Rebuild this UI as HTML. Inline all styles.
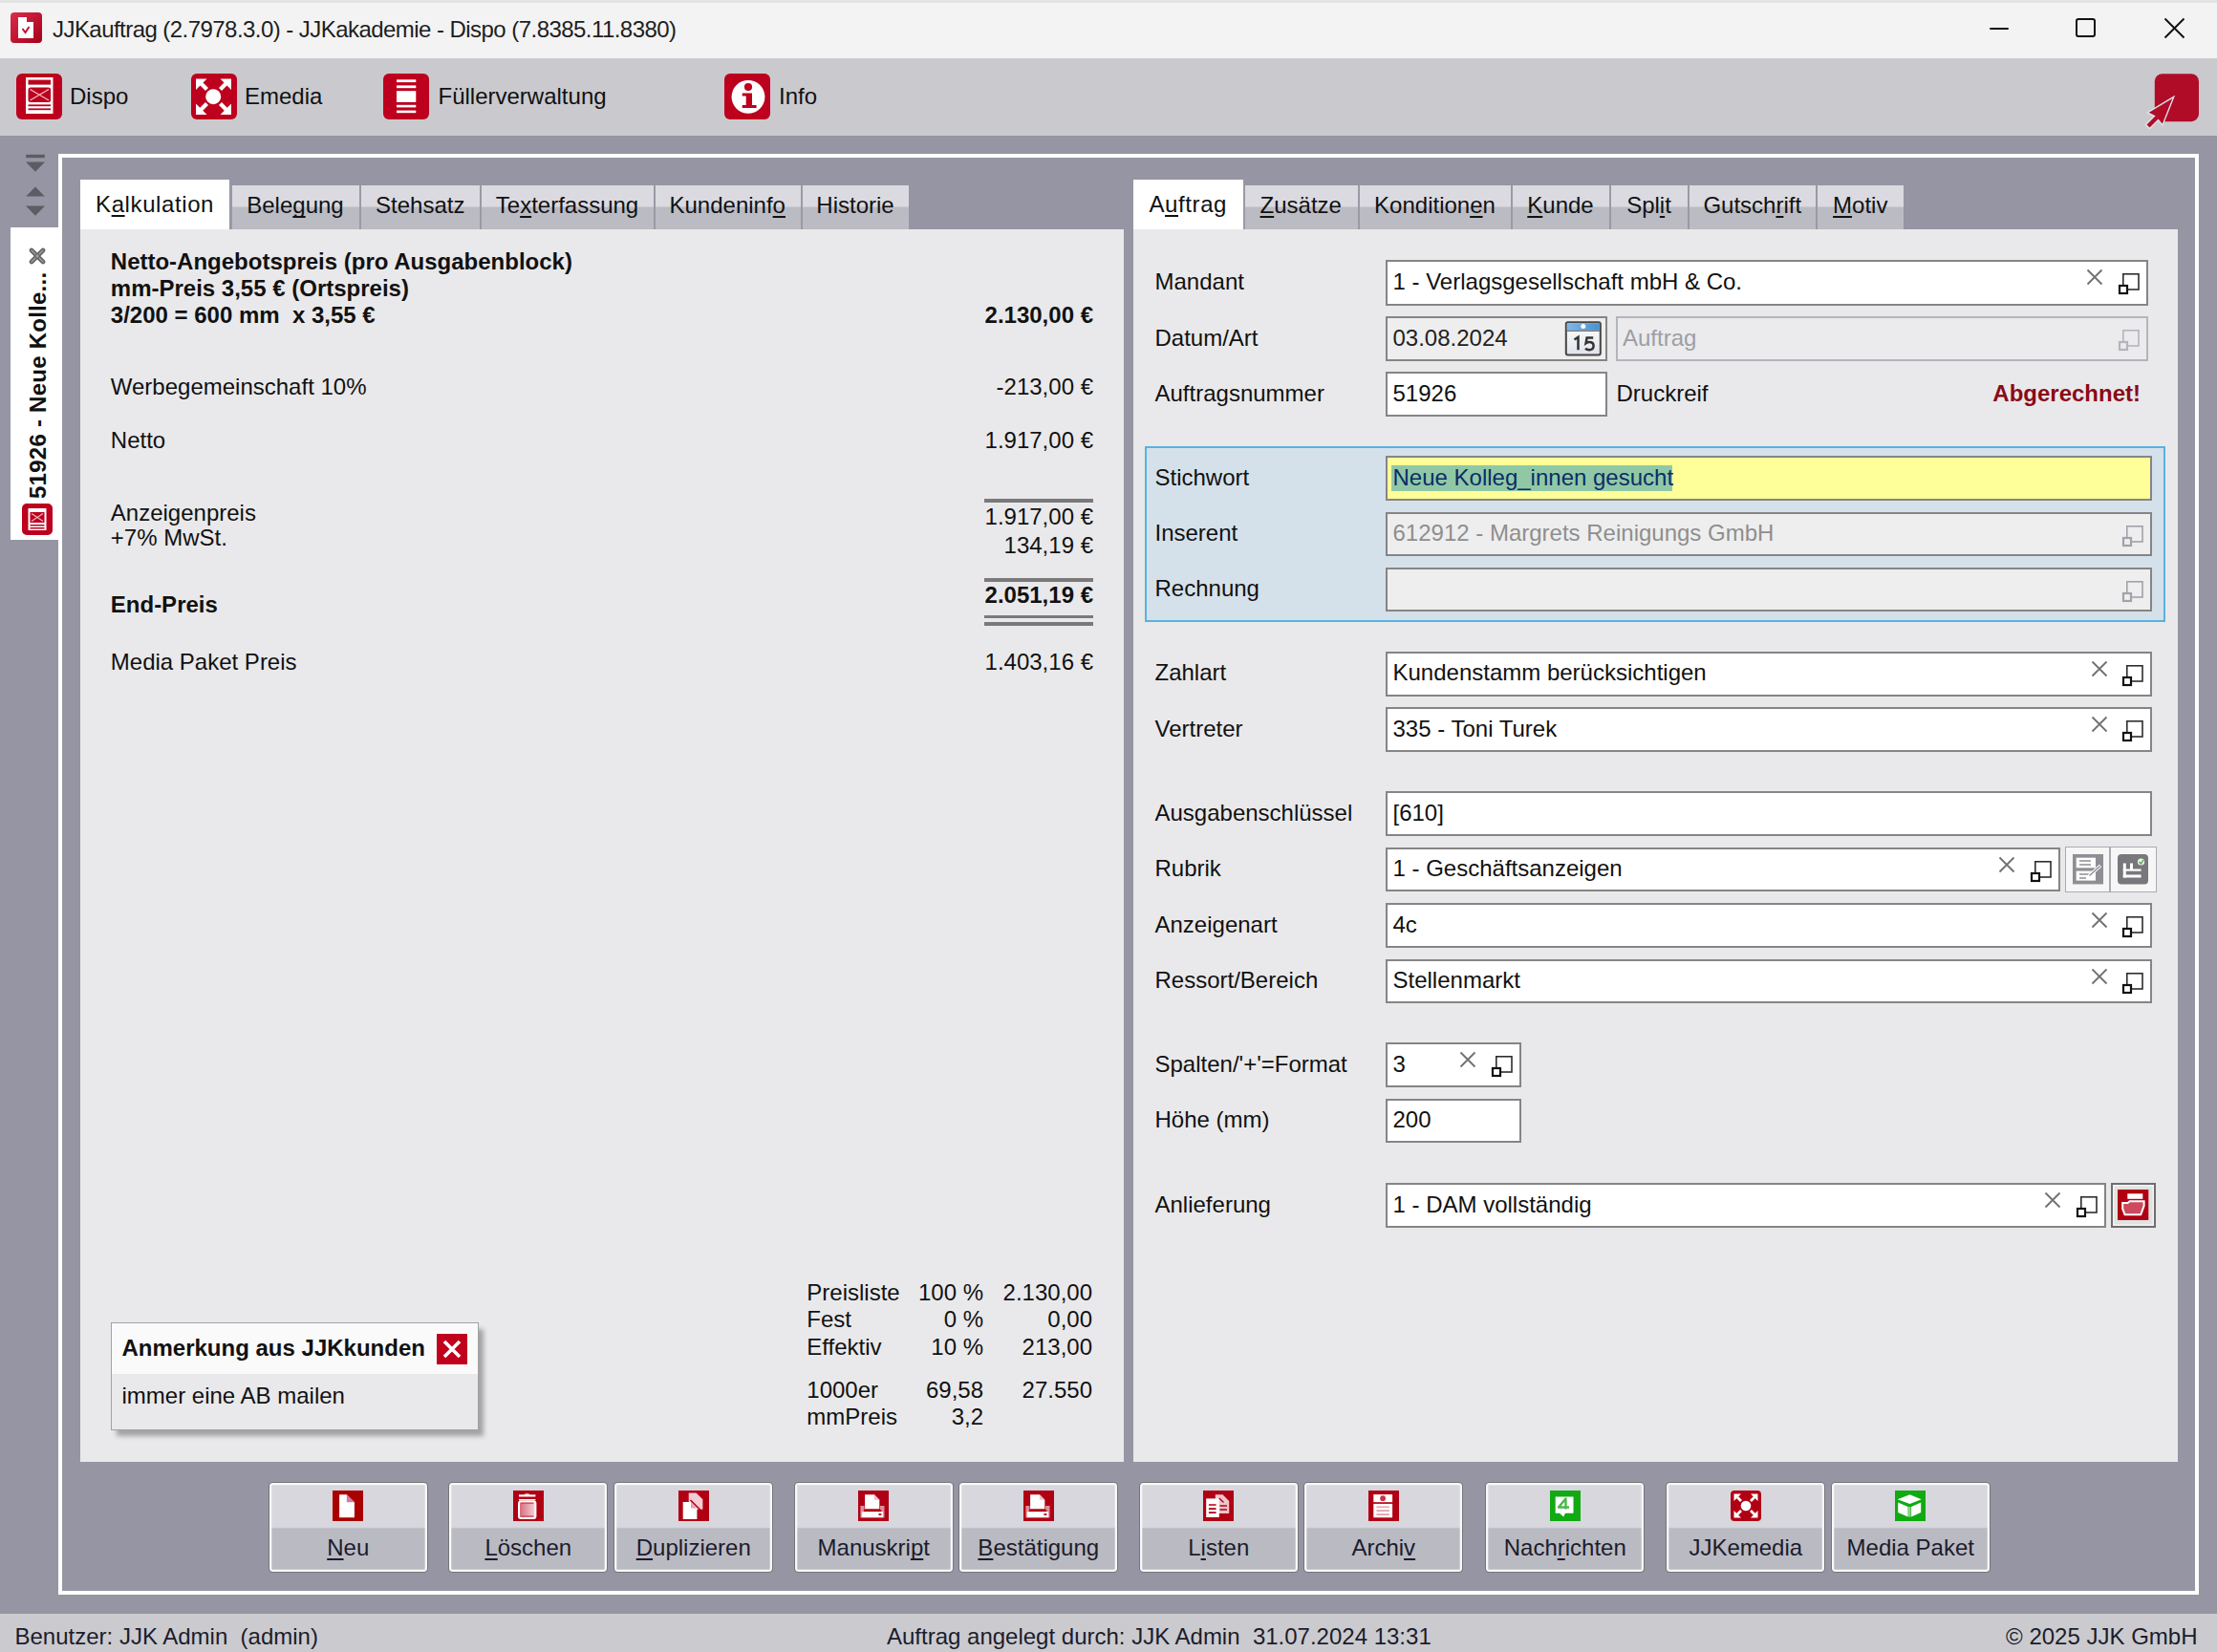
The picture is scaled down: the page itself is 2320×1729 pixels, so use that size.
<!DOCTYPE html>
<html><head><meta charset="utf-8"><title>JJKauftrag</title>
<style>
html,body{margin:0;padding:0;}
body{width:2320px;height:1729px;position:relative;overflow:hidden;background:#9695a3;font-family:"Liberation Sans",sans-serif;}
div,span,svg{position:absolute;box-sizing:border-box;}
.t{line-height:28px;white-space:pre;}
u{text-decoration:underline;text-decoration-thickness:2px;text-underline-offset:3px;text-decoration-skip-ink:none;}
</style></head><body>

<div style="left:0px;top:0px;width:2320.00px;height:61.00px;background:#f3f3f3;"></div>
<div style="left:0px;top:0px;width:2320.00px;height:3.00px;background:#e4e4e4;"></div>
<svg style="left:11px;top:13px" width="33" height="33" viewBox="0 0 33 33"><defs><linearGradient id="tg" x1="0" y1="0" x2="1" y2="1"><stop offset="0" stop-color="#dc2c4c"/><stop offset="1" stop-color="#a4001a"/></linearGradient></defs><rect x="0" y="0" width="33" height="32" rx="4" fill="url(#tg)"/><path d="M8 5 H17 V10 H24 V27 H8 Z" fill="#fff"/><path d="M12.5 17 L15.5 21 L19.5 15" stroke="#c8102e" stroke-width="2" fill="none"/></svg>
<span class="t" style="top:16.5px;font-size:24px;font-weight:normal;color:#1e1e1e;left:55px;letter-spacing:-0.55px;">JJKauftrag (2.7978.3.0) - JJKakademie - Dispo (7.8385.11.8380)</span>
<div style="left:2081.8px;top:28.9px;width:20.40px;height:2.00px;background:#111;border-radius:1px;"></div>
<div style="left:2172.4px;top:19.1px;width:20.20px;height:20.10px;border:2.1px solid #111;border-radius:3px;"></div>
<svg style="left:2264px;top:18px" width="23" height="23" viewBox="0 0 23 23"><path d="M1.5 1.5 L21.5 21.5 M21.5 1.5 L1.5 21.5" stroke="#111" stroke-width="1.9"/></svg>
<div style="left:0px;top:61px;width:2320.00px;height:80.50px;background:#cacace;"></div>
<svg style="left:17px;top:77px" width="48" height="48" viewBox="0 0 48 48"><rect x="0" y="0" width="48" height="48" rx="6" fill="#bc001e"/><rect x="10" y="4" width="28.5" height="38" fill="#fff"/><rect x="12.5" y="6.6" width="23.6" height="5" fill="#bc001e"/><rect x="12.5" y="14.6" width="23.6" height="15.3" rx="2.5" fill="#bc001e"/><path d="M14.5 16.5 L34 28 M34 16.5 L14.5 28" stroke="#f4b8c0" stroke-width="1.4"/><rect x="12.5" y="32.4" width="23.6" height="1.8" fill="#bc001e"/><rect x="12.5" y="36.4" width="23.6" height="1.8" fill="#bc001e"/></svg>
<span class="t" style="top:87.0px;font-size:24px;font-weight:normal;color:#111;left:73px;">Dispo</span>
<svg style="left:200px;top:77px" width="48" height="48" viewBox="0 0 48 48"><rect x="0" y="0" width="48" height="48" rx="6" fill="#bc001e"/><circle cx="23.2" cy="24.2" r="8" fill="#fff"/><g stroke="#fff" stroke-width="4.2"><path d="M9 9 L16.5 16.5"/><path d="M38 9 L30.5 16.5"/><path d="M9 39 L16.5 31.5"/><path d="M38 39 L30.5 31.5"/></g><g fill="#fff"><path d="M5 5.5 H16.5 L5 17 Z"/><path d="M42 5.5 H30.5 L42 17 Z"/><path d="M5 43 H16.5 L5 31.5 Z"/><path d="M42 43 H30.5 L42 31.5 Z"/></g></svg>
<span class="t" style="top:87.0px;font-size:24px;font-weight:normal;color:#111;left:256px;">Emedia</span>
<svg style="left:401px;top:77px" width="48" height="48" viewBox="0 0 48 48"><rect x="0" y="0" width="48" height="48" rx="6" fill="#bc001e"/><rect x="14" y="6.3" width="20.3" height="2.8" fill="#fff"/><rect x="14" y="12.4" width="20.3" height="2.8" fill="#fff"/><rect x="14" y="18.2" width="20.3" height="11.7" fill="#fff"/><rect x="14" y="32.8" width="20.3" height="2.6" fill="#fff"/><rect x="14" y="38.6" width="20.3" height="2.6" fill="#fff"/></svg>
<span class="t" style="top:87.0px;font-size:24px;font-weight:normal;color:#111;left:458.5px;">Füllerverwaltung</span>
<svg style="left:758px;top:77px" width="48" height="48" viewBox="0 0 48 48"><rect x="0" y="0" width="48" height="48" rx="6" fill="#bc001e"/><circle cx="25" cy="24.4" r="17.4" fill="#fff"/><circle cx="25" cy="14" r="4.1" fill="#bc001e"/><path d="M18.7 20.4 H29 V33 H33.6 V36 H18.7 V33 H22.7 V23.4 H18.7 Z" fill="#bc001e"/></svg>
<span class="t" style="top:87.0px;font-size:24px;font-weight:normal;color:#111;left:815px;">Info</span>
<svg style="left:2240px;top:70px" width="70" height="70" viewBox="0 0 70 70"><rect x="14.8" y="7.2" width="46.2" height="50" rx="8" fill="#b00c28"/><path d="M34.7 31.4 L7.2 47.9 L14.5 51.5 L5.5 60.5 L9.5 64.5 L18.5 55.5 L23 61 Z" fill="#b00c28" stroke="#dfe4ea" stroke-width="1.4" stroke-linejoin="miter"/></svg>
<svg style="left:26px;top:160px" width="22" height="70" viewBox="0 0 22 70"><rect x="1.2" y="1.8" width="19.6" height="3.4" fill="#5c5c64"/><path d="M1 9.6 H21 L11 19.8 Z" fill="#5c5c64"/><path d="M1.2 45.6 H20.8 L11 35.6 Z" fill="#5c5c64"/><path d="M1 55.6 H21 L11 65.8 Z" fill="#5c5c64"/></svg>
<div style="left:10.7px;top:238px;width:51.30px;height:327.00px;background:#fff;"></div>
<svg style="left:30px;top:259px" width="18" height="18" viewBox="0 0 18 18"><path d="M3 3 L15 15 M15 3 L3 15" stroke="#606060" stroke-width="4.6" stroke-linecap="round"/><path d="M3 3 L15 15 M15 3 L3 15" stroke="#a0a0a0" stroke-width="1.6" stroke-linecap="round"/><circle cx="9" cy="9" r="2.2" fill="#a0a0a0" stroke="#606060" stroke-width="1"/></svg>
<span class="t" style="left:-85px;top:383px;width:250px;font-size:24px;font-weight:bold;color:#111;transform:rotate(-90deg);text-align:left;letter-spacing:0.25px;">51926 - Neue Kolle...</span>
<svg style="left:23px;top:527px" width="32" height="33" viewBox="0 0 32 33"><rect width="32" height="33" rx="5" fill="#bc001e"/><rect x="6.5" y="5" width="19" height="23" fill="#fff"/><rect x="8.5" y="9" width="15" height="11" fill="#bc001e"/><path d="M10 10.5 L22 18.5 M22 10.5 L10 18.5" stroke="#f4b8c0" stroke-width="1.2"/><rect x="8.5" y="22" width="15" height="1.5" fill="#bc001e"/><rect x="8.5" y="25" width="15" height="1.5" fill="#bc001e"/></svg>
<div style="left:61px;top:161px;width:2240.00px;height:1508.00px;border:4.8px solid #fff;"></div>
<div style="left:83.6px;top:239.5px;width:1092.40px;height:1290.50px;background:#e9e9eb;"></div>
<div style="left:1186px;top:239.5px;width:1093.00px;height:1290.50px;background:#e9e9eb;"></div>
<div style="left:83.6px;top:187.5px;width:156.90px;height:52.00px;background:#fff;"></div>
<span class="t" style="top:199.5px;font-size:24px;font-weight:normal;color:#111;left:-237.95px;width:800px;text-align:center;letter-spacing:0.6px;">K<u>a</u>lkulation</span>
<div style="left:240.5px;top:193.5px;width:135.50px;height:46.00px;background:linear-gradient(#dadae0 0,#dadae0 21.5px,#bbbbc4 23.5px,#bbbbc4 100%);border-left:2.5px solid #9a9aa6;"></div>
<span class="t" style="top:201.3px;font-size:24px;font-weight:normal;color:#111;left:-91.0px;width:800px;text-align:center;">Bele<u>g</u>ung</span>
<div style="left:376px;top:193.5px;width:126.00px;height:46.00px;background:linear-gradient(#dadae0 0,#dadae0 21.5px,#bbbbc4 23.5px,#bbbbc4 100%);border-left:2.5px solid #9a9aa6;"></div>
<span class="t" style="top:201.3px;font-size:24px;font-weight:normal;color:#111;left:39.75px;width:800px;text-align:center;">Stehsatz</span>
<div style="left:502px;top:193.5px;width:181.50px;height:46.00px;background:linear-gradient(#dadae0 0,#dadae0 21.5px,#bbbbc4 23.5px,#bbbbc4 100%);border-left:2.5px solid #9a9aa6;"></div>
<span class="t" style="top:201.3px;font-size:24px;font-weight:normal;color:#111;left:193.5px;width:800px;text-align:center;">Te<u>x</u>terfassung</span>
<div style="left:683.5px;top:193.5px;width:154.00px;height:46.00px;background:linear-gradient(#dadae0 0,#dadae0 21.5px,#bbbbc4 23.5px,#bbbbc4 100%);border-left:2.5px solid #9a9aa6;"></div>
<span class="t" style="top:201.3px;font-size:24px;font-weight:normal;color:#111;left:361.25px;width:800px;text-align:center;">Kundeninf<u>o</u></span>
<div style="left:837.5px;top:193.5px;width:113.50px;height:46.00px;background:linear-gradient(#dadae0 0,#dadae0 21.5px,#bbbbc4 23.5px,#bbbbc4 100%);border-left:2.5px solid #9a9aa6;"></div>
<span class="t" style="top:201.3px;font-size:24px;font-weight:normal;color:#111;left:495.0px;width:800px;text-align:center;">Historie</span>
<div style="left:1186px;top:187.5px;width:114.50px;height:52.00px;background:#fff;"></div>
<span class="t" style="top:199.5px;font-size:24px;font-weight:normal;color:#111;left:843.25px;width:800px;text-align:center;letter-spacing:0.6px;">A<u>u</u>ftrag</span>
<div style="left:1300.5px;top:193.5px;width:120.00px;height:46.00px;background:linear-gradient(#dadae0 0,#dadae0 21.5px,#bbbbc4 23.5px,#bbbbc4 100%);border-left:2.5px solid #9a9aa6;"></div>
<span class="t" style="top:201.3px;font-size:24px;font-weight:normal;color:#111;left:961.25px;width:800px;text-align:center;"><u>Z</u>usätze</span>
<div style="left:1420.5px;top:193.5px;width:160.50px;height:46.00px;background:linear-gradient(#dadae0 0,#dadae0 21.5px,#bbbbc4 23.5px,#bbbbc4 100%);border-left:2.5px solid #9a9aa6;"></div>
<span class="t" style="top:201.3px;font-size:24px;font-weight:normal;color:#111;left:1101.5px;width:800px;text-align:center;">Kondition<u>e</u>n</span>
<div style="left:1581px;top:193.5px;width:102.50px;height:46.00px;background:linear-gradient(#dadae0 0,#dadae0 21.5px,#bbbbc4 23.5px,#bbbbc4 100%);border-left:2.5px solid #9a9aa6;"></div>
<span class="t" style="top:201.3px;font-size:24px;font-weight:normal;color:#111;left:1233.0px;width:800px;text-align:center;"><u>K</u>unde</span>
<div style="left:1683.5px;top:193.5px;width:82.50px;height:46.00px;background:linear-gradient(#dadae0 0,#dadae0 21.5px,#bbbbc4 23.5px,#bbbbc4 100%);border-left:2.5px solid #9a9aa6;"></div>
<span class="t" style="top:201.3px;font-size:24px;font-weight:normal;color:#111;left:1325.5px;width:800px;text-align:center;">Spl<u>i</u>t</span>
<div style="left:1766px;top:193.5px;width:134.00px;height:46.00px;background:linear-gradient(#dadae0 0,#dadae0 21.5px,#bbbbc4 23.5px,#bbbbc4 100%);border-left:2.5px solid #9a9aa6;"></div>
<span class="t" style="top:201.3px;font-size:24px;font-weight:normal;color:#111;left:1433.75px;width:800px;text-align:center;">Gutsch<u>r</u>ift</span>
<div style="left:1900px;top:193.5px;width:92.00px;height:46.00px;background:linear-gradient(#dadae0 0,#dadae0 21.5px,#bbbbc4 23.5px,#bbbbc4 100%);border-left:2.5px solid #9a9aa6;"></div>
<span class="t" style="top:201.3px;font-size:24px;font-weight:normal;color:#111;left:1546.75px;width:800px;text-align:center;"><u>M</u>otiv</span>
<span class="t" style="top:260.0px;font-size:24px;font-weight:bold;color:#111;left:115.8px;">Netto-Angebotspreis (pro Ausgabenblock)</span>
<span class="t" style="top:287.5px;font-size:24px;font-weight:bold;color:#111;left:115.8px;">mm-Preis 3,55 € (Ortspreis)</span>
<span class="t" style="top:315.5px;font-size:24px;font-weight:bold;color:#111;left:115.8px;">3/200 = 600 mm  x 3,55 €</span>
<span class="t" style="top:316.0px;font-size:24px;font-weight:bold;color:#111;right:1176px;">2.130,00 €</span>
<span class="t" style="top:390.5px;font-size:24px;font-weight:normal;color:#111;left:115.8px;">Werbegemeinschaft 10%</span>
<span class="t" style="top:390.5px;font-size:24px;font-weight:normal;color:#111;right:1176px;">-213,00 €</span>
<span class="t" style="top:446.5px;font-size:24px;font-weight:normal;color:#111;left:115.8px;">Netto</span>
<span class="t" style="top:446.5px;font-size:24px;font-weight:normal;color:#111;right:1176px;">1.917,00 €</span>
<div style="left:1030px;top:522px;width:114.00px;height:3.50px;background:#7a7a7a;"></div>
<span class="t" style="top:522.5px;font-size:24px;font-weight:normal;color:#111;left:115.8px;">Anzeigenpreis</span>
<span class="t" style="top:526.5px;font-size:24px;font-weight:normal;color:#111;right:1176px;">1.917,00 €</span>
<span class="t" style="top:549.0px;font-size:24px;font-weight:normal;color:#111;left:115.8px;">+7% MwSt.</span>
<span class="t" style="top:556.5px;font-size:24px;font-weight:normal;color:#111;right:1176px;">134,19 €</span>
<div style="left:1030px;top:605px;width:114.00px;height:3.50px;background:#7a7a7a;"></div>
<span class="t" style="top:619.0px;font-size:24px;font-weight:bold;color:#111;left:115.8px;">End-Preis</span>
<span class="t" style="top:608.5px;font-size:24px;font-weight:bold;color:#111;right:1176px;">2.051,19 €</span>
<div style="left:1030px;top:643.5px;width:114.00px;height:3.50px;background:#7a7a7a;"></div>
<div style="left:1030px;top:651px;width:114.00px;height:3.50px;background:#7a7a7a;"></div>
<span class="t" style="top:679.0px;font-size:24px;font-weight:normal;color:#111;left:115.8px;">Media Paket Preis</span>
<span class="t" style="top:679.0px;font-size:24px;font-weight:normal;color:#111;right:1176px;">1.403,16 €</span>
<span class="t" style="top:1339.0px;font-size:24px;font-weight:normal;color:#111;left:844.3px;">Preisliste</span>
<span class="t" style="top:1339.0px;font-size:24px;font-weight:normal;color:#111;right:1291px;">100 %</span>
<span class="t" style="top:1339.0px;font-size:24px;font-weight:normal;color:#111;right:1177px;">2.130,00</span>
<span class="t" style="top:1367.3px;font-size:24px;font-weight:normal;color:#111;left:844.3px;">Fest</span>
<span class="t" style="top:1367.3px;font-size:24px;font-weight:normal;color:#111;right:1291px;">0 %</span>
<span class="t" style="top:1367.3px;font-size:24px;font-weight:normal;color:#111;right:1177px;">0,00</span>
<span class="t" style="top:1395.6px;font-size:24px;font-weight:normal;color:#111;left:844.3px;">Effektiv</span>
<span class="t" style="top:1395.6px;font-size:24px;font-weight:normal;color:#111;right:1291px;">10 %</span>
<span class="t" style="top:1395.6px;font-size:24px;font-weight:normal;color:#111;right:1177px;">213,00</span>
<span class="t" style="top:1441.4px;font-size:24px;font-weight:normal;color:#111;left:844.3px;">1000er</span>
<span class="t" style="top:1441.4px;font-size:24px;font-weight:normal;color:#111;right:1291px;">69,58</span>
<span class="t" style="top:1441.4px;font-size:24px;font-weight:normal;color:#111;right:1177px;">27.550</span>
<span class="t" style="top:1469.0px;font-size:24px;font-weight:normal;color:#111;left:844.3px;">mmPreis</span>
<span class="t" style="top:1469.0px;font-size:24px;font-weight:normal;color:#111;right:1291px;">3,2</span>
<div style="left:122px;top:1391px;width:384.00px;height:112.00px;background:rgba(0,0,0,0.30);filter:blur(2.5px);"></div>
<div style="left:115.5px;top:1384px;width:385.00px;height:113.00px;background:#e9e9eb;border:1px solid #a2a2a2;"></div>
<div style="left:116.5px;top:1385px;width:383.00px;height:53.00px;background:#fafafa;"></div>
<span class="t" style="top:1397.0px;font-size:24px;font-weight:bold;color:#111;left:127.5px;">Anmerkung aus JJKkunden</span>
<svg style="left:457px;top:1396px" width="32" height="32" viewBox="0 0 32 32"><rect width="32" height="32" fill="#c0001c"/><path d="M8 8 L24 24 M24 8 L8 24" stroke="#fff" stroke-width="3.6"/></svg>
<span class="t" style="top:1447.0px;font-size:24px;font-weight:normal;color:#111;left:127.5px;">immer eine AB mailen</span>
<span class="t" style="top:280.7px;font-size:24px;font-weight:normal;color:#111;left:1208.5px;">Mandant</span>
<div style="left:1449.5px;top:272.2px;width:798.30px;height:47.50px;background:#fff;border:2px solid #858585;"></div>
<span class="t" style="top:280.7px;font-size:24px;font-weight:normal;color:#111;left:1457.5px;">1 - Verlagsgesellschaft mbH &amp; Co.</span>
<svg style="left:2183.3px;top:281.2px" width="18" height="18" viewBox="0 0 18 18"><path d="M1.5 1.5 L16.5 16.5 M16.5 1.5 L1.5 16.5" stroke="#727272" stroke-width="1.9"/></svg>
<svg style="left:2214.8px;top:284.2px" width="26" height="26" viewBox="0 0 26 26"><rect x="6.8" y="2.8" width="16.2" height="16.2" fill="none" stroke="#2e2e2e" stroke-width="1.6"/><rect x="3" y="15" width="8" height="8" fill="#fff" stroke="#111" stroke-width="2.2"/></svg>
<span class="t" style="top:339.5px;font-size:24px;font-weight:normal;color:#111;left:1208.5px;">Datum/Art</span>
<div style="left:1449.5px;top:330.6px;width:232.50px;height:47.20px;background:#eeeeee;border:2px solid #858585;"></div>
<span class="t" style="top:339.5px;font-size:24px;font-weight:normal;color:#222;left:1457.5px;">03.08.2024</span>
<svg style="left:1637px;top:336px" width="40" height="37" viewBox="0 0 40 37"><defs><linearGradient id="cg" x1="0" y1="0" x2="0" y2="1"><stop offset="0" stop-color="#ffffff"/><stop offset="1" stop-color="#dfe3ea"/></linearGradient><linearGradient id="cb" x1="0" y1="0" x2="1" y2="0"><stop offset="0" stop-color="#7cb8ea"/><stop offset="1" stop-color="#4a90cc"/></linearGradient></defs><rect x="1.8" y="1.2" width="36" height="34.4" rx="2" fill="url(#cg)" stroke="#454545" stroke-width="2"/><rect x="2.8" y="2.2" width="34" height="7.4" fill="url(#cb)"/><rect x="2.8" y="9.6" width="34" height="1.2" fill="#55606c"/><circle cx="19.8" cy="5.6" r="2.5" fill="#fff"/><path d="M10.5 19.5 L14.5 16.8 V30.2" fill="none" stroke="#333" stroke-width="2.5"/><path d="M30.2 17.6 H23.6 L22.6 23.2 Q24.2 22 26.2 22 Q30.6 22 30.6 26 Q30.6 30.2 26 30.2 Q23.6 30.2 22 28.8" fill="none" stroke="#333" stroke-width="2.5"/></svg>
<div style="left:1690.8px;top:330.6px;width:557.00px;height:47.20px;background:#ebebee;border:2px solid #b4b4bc;"></div>
<span class="t" style="top:339.5px;font-size:24px;font-weight:normal;color:#9e9ea2;left:1698px;">Auftrag</span>
<svg style="left:2214.8px;top:342.6px" width="26" height="26" viewBox="0 0 26 26"><rect x="6.8" y="2.8" width="16.2" height="16.2" fill="none" stroke="#b4b4bc" stroke-width="1.6"/><rect x="3" y="15" width="8" height="8" fill="#ebebee" stroke="#b4b4bc" stroke-width="2.2"/></svg>
<span class="t" style="top:398.0px;font-size:24px;font-weight:normal;color:#111;left:1208.5px;">Auftragsnummer</span>
<div style="left:1449.5px;top:388.6px;width:232.50px;height:47.20px;background:#fff;border:2px solid #858585;"></div>
<span class="t" style="top:398.0px;font-size:24px;font-weight:normal;color:#111;left:1457.5px;">51926</span>
<span class="t" style="top:398.0px;font-size:24px;font-weight:normal;color:#111;left:1691.5px;">Druckreif</span>
<span class="t" style="top:398.0px;font-size:24px;font-weight:bold;color:#8c0a16;right:80px;">Abgerechnet!</span>
<div style="left:1198.3px;top:467px;width:1067.70px;height:184.00px;background:#d5e1ea;border:2px solid #58b2e0;"></div>
<span class="t" style="top:486.0px;font-size:24px;font-weight:normal;color:#111;left:1208.5px;">Stichwort</span>
<div style="left:1449.5px;top:477.4px;width:802.80px;height:46.40px;background:#ffff99;border:2px solid #858585;"></div>
<div style="left:1456px;top:487.4px;width:294.40px;height:26.60px;background:#90c8a6;"></div>
<span class="t" style="top:486.0px;font-size:24px;font-weight:normal;color:#0b2d66;left:1457.5px;">Neue Kolleg_innen gesucht</span>
<span class="t" style="top:544.0px;font-size:24px;font-weight:normal;color:#111;left:1208.5px;">Inserent</span>
<div style="left:1449.5px;top:535.5px;width:802.80px;height:46.80px;background:#eeeeee;border:2px solid #858585;"></div>
<span class="t" style="top:544.0px;font-size:24px;font-weight:normal;color:#8e8e8e;left:1457.5px;">612912 - Margrets Reinigungs GmbH</span>
<svg style="left:2219.3px;top:547.5px" width="26" height="26" viewBox="0 0 26 26"><rect x="6.8" y="2.8" width="16.2" height="16.2" fill="none" stroke="#a2a2aa" stroke-width="1.6"/><rect x="3" y="15" width="8" height="8" fill="#eeeeee" stroke="#a2a2aa" stroke-width="2.2"/></svg>
<span class="t" style="top:602.1px;font-size:24px;font-weight:normal;color:#111;left:1208.5px;">Rechnung</span>
<div style="left:1449.5px;top:593.6px;width:802.80px;height:46.80px;background:#eeeeee;border:2px solid #858585;"></div>
<svg style="left:2219.3px;top:605.6px" width="26" height="26" viewBox="0 0 26 26"><rect x="6.8" y="2.8" width="16.2" height="16.2" fill="none" stroke="#a2a2aa" stroke-width="1.6"/><rect x="3" y="15" width="8" height="8" fill="#eeeeee" stroke="#a2a2aa" stroke-width="2.2"/></svg>
<span class="t" style="top:690.3px;font-size:24px;font-weight:normal;color:#111;left:1208.5px;">Zahlart</span>
<div style="left:1449.5px;top:681.8px;width:802.80px;height:46.80px;background:#fff;border:2px solid #858585;"></div>
<span class="t" style="top:690.3px;font-size:24px;font-weight:normal;color:#111;left:1457.5px;">Kundenstamm berücksichtigen</span>
<svg style="left:2187.8px;top:690.8px" width="18" height="18" viewBox="0 0 18 18"><path d="M1.5 1.5 L16.5 16.5 M16.5 1.5 L1.5 16.5" stroke="#727272" stroke-width="1.9"/></svg>
<svg style="left:2219.3px;top:693.8px" width="26" height="26" viewBox="0 0 26 26"><rect x="6.8" y="2.8" width="16.2" height="16.2" fill="none" stroke="#2e2e2e" stroke-width="1.6"/><rect x="3" y="15" width="8" height="8" fill="#fff" stroke="#111" stroke-width="2.2"/></svg>
<span class="t" style="top:748.9px;font-size:24px;font-weight:normal;color:#111;left:1208.5px;">Vertreter</span>
<div style="left:1449.5px;top:740.4px;width:802.80px;height:46.80px;background:#fff;border:2px solid #858585;"></div>
<span class="t" style="top:748.9px;font-size:24px;font-weight:normal;color:#111;left:1457.5px;">335 - Toni Turek</span>
<svg style="left:2187.8px;top:749.4px" width="18" height="18" viewBox="0 0 18 18"><path d="M1.5 1.5 L16.5 16.5 M16.5 1.5 L1.5 16.5" stroke="#727272" stroke-width="1.9"/></svg>
<svg style="left:2219.3px;top:752.4px" width="26" height="26" viewBox="0 0 26 26"><rect x="6.8" y="2.8" width="16.2" height="16.2" fill="none" stroke="#2e2e2e" stroke-width="1.6"/><rect x="3" y="15" width="8" height="8" fill="#fff" stroke="#111" stroke-width="2.2"/></svg>
<span class="t" style="top:836.8px;font-size:24px;font-weight:normal;color:#111;left:1208.5px;">Ausgabenschlüssel</span>
<div style="left:1449.5px;top:828.3px;width:802.80px;height:46.80px;background:#fff;border:2px solid #858585;"></div>
<span class="t" style="top:836.8px;font-size:24px;font-weight:normal;color:#111;left:1457.5px;">[610]</span>
<span class="t" style="top:895.1px;font-size:24px;font-weight:normal;color:#111;left:1208.5px;">Rubrik</span>
<div style="left:1449.5px;top:886.6px;width:706.00px;height:46.80px;background:#fff;border:2px solid #858585;"></div>
<span class="t" style="top:895.1px;font-size:24px;font-weight:normal;color:#111;left:1457.5px;">1 - Geschäftsanzeigen</span>
<svg style="left:2091.0px;top:895.6px" width="18" height="18" viewBox="0 0 18 18"><path d="M1.5 1.5 L16.5 16.5 M16.5 1.5 L1.5 16.5" stroke="#727272" stroke-width="1.9"/></svg>
<svg style="left:2122.5px;top:898.6px" width="26" height="26" viewBox="0 0 26 26"><rect x="6.8" y="2.8" width="16.2" height="16.2" fill="none" stroke="#2e2e2e" stroke-width="1.6"/><rect x="3" y="15" width="8" height="8" fill="#fff" stroke="#111" stroke-width="2.2"/></svg>
<div style="left:2160.5px;top:886px;width:96.00px;height:47.80px;background:#f6f6f6;border:1.6px solid #a8acb0;"></div>
<div style="left:2206.8px;top:886.5px;width:2.60px;height:46.80px;background:#a8acb0;"></div>
<svg style="left:2168.5px;top:894.3px" width="32" height="32" viewBox="0 0 32 32"><rect width="32" height="31.4" fill="#8e8e94"/><rect x="3.7" y="3.7" width="20.3" height="10.6" fill="#fff"/><rect x="3.7" y="17.6" width="20.3" height="10" fill="#fff"/><path d="M7 7 H19 M7 11 H19 M7 21 H17 M7 25 H14" stroke="#8e8e94" stroke-width="1.6"/><path d="M17 23 L29 12" stroke="#fff" stroke-width="3.5"/><path d="M17.5 22.5 L28.5 12.5" stroke="#8e8e94" stroke-width="1.4"/></svg>
<svg style="left:2216.4px;top:894.3px" width="32" height="32" viewBox="0 0 32 32"><rect width="32" height="31.4" rx="4" fill="#78787c"/><path d="M6 10 V24 H24.5 V18.5 H6" fill="none" stroke="#fff" stroke-width="0"/><rect x="5.8" y="9.5" width="3" height="15" fill="#fff"/><rect x="5.8" y="21.5" width="18.8" height="3" fill="#fff"/><rect x="5.8" y="15.5" width="18.8" height="2.2" fill="#fff"/><rect x="13" y="9.5" width="3" height="7" fill="#fff"/><circle cx="24.5" cy="8" r="3.6" fill="#e8f4e0"/><path d="M22.5 8 L24.5 10 L27 6" stroke="#4aa040" stroke-width="1.2" fill="none"/></svg>
<span class="t" style="top:953.8px;font-size:24px;font-weight:normal;color:#111;left:1208.5px;">Anzeigenart</span>
<div style="left:1449.5px;top:945.3px;width:802.80px;height:46.80px;background:#fff;border:2px solid #858585;"></div>
<span class="t" style="top:953.8px;font-size:24px;font-weight:normal;color:#111;left:1457.5px;">4c</span>
<svg style="left:2187.8px;top:954.3px" width="18" height="18" viewBox="0 0 18 18"><path d="M1.5 1.5 L16.5 16.5 M16.5 1.5 L1.5 16.5" stroke="#727272" stroke-width="1.9"/></svg>
<svg style="left:2219.3px;top:957.3px" width="26" height="26" viewBox="0 0 26 26"><rect x="6.8" y="2.8" width="16.2" height="16.2" fill="none" stroke="#2e2e2e" stroke-width="1.6"/><rect x="3" y="15" width="8" height="8" fill="#fff" stroke="#111" stroke-width="2.2"/></svg>
<span class="t" style="top:1012.1px;font-size:24px;font-weight:normal;color:#111;left:1208.5px;">Ressort/Bereich</span>
<div style="left:1449.5px;top:1003.6px;width:802.80px;height:46.80px;background:#fff;border:2px solid #858585;"></div>
<span class="t" style="top:1012.1px;font-size:24px;font-weight:normal;color:#111;left:1457.5px;">Stellenmarkt</span>
<svg style="left:2187.8px;top:1012.6px" width="18" height="18" viewBox="0 0 18 18"><path d="M1.5 1.5 L16.5 16.5 M16.5 1.5 L1.5 16.5" stroke="#727272" stroke-width="1.9"/></svg>
<svg style="left:2219.3px;top:1015.6px" width="26" height="26" viewBox="0 0 26 26"><rect x="6.8" y="2.8" width="16.2" height="16.2" fill="none" stroke="#2e2e2e" stroke-width="1.6"/><rect x="3" y="15" width="8" height="8" fill="#fff" stroke="#111" stroke-width="2.2"/></svg>
<span class="t" style="top:1099.5px;font-size:24px;font-weight:normal;color:#111;left:1208.5px;">Spalten/'+'=Format</span>
<div style="left:1449.5px;top:1091px;width:142.30px;height:46.80px;background:#fff;border:2px solid #858585;"></div>
<span class="t" style="top:1099.5px;font-size:24px;font-weight:normal;color:#111;left:1457.5px;">3</span>
<svg style="left:1527.3px;top:1100px" width="18" height="18" viewBox="0 0 18 18"><path d="M1.5 1.5 L16.5 16.5 M16.5 1.5 L1.5 16.5" stroke="#727272" stroke-width="1.9"/></svg>
<svg style="left:1558.8px;top:1103px" width="26" height="26" viewBox="0 0 26 26"><rect x="6.8" y="2.8" width="16.2" height="16.2" fill="none" stroke="#2e2e2e" stroke-width="1.6"/><rect x="3" y="15" width="8" height="8" fill="#fff" stroke="#111" stroke-width="2.2"/></svg>
<span class="t" style="top:1158.2px;font-size:24px;font-weight:normal;color:#111;left:1208.5px;">Höhe (mm)</span>
<div style="left:1449.5px;top:1149.7px;width:142.30px;height:46.80px;background:#fff;border:2px solid #858585;"></div>
<span class="t" style="top:1158.2px;font-size:24px;font-weight:normal;color:#111;left:1457.5px;">200</span>
<span class="t" style="top:1246.7px;font-size:24px;font-weight:normal;color:#111;left:1208.5px;">Anlieferung</span>
<div style="left:1449.5px;top:1238.2px;width:754.30px;height:46.80px;background:#fff;border:2px solid #858585;"></div>
<span class="t" style="top:1246.7px;font-size:24px;font-weight:normal;color:#111;left:1457.5px;">1 - DAM vollständig</span>
<svg style="left:2139.3px;top:1247.2px" width="18" height="18" viewBox="0 0 18 18"><path d="M1.5 1.5 L16.5 16.5 M16.5 1.5 L1.5 16.5" stroke="#727272" stroke-width="1.9"/></svg>
<svg style="left:2170.8px;top:1250.2px" width="26" height="26" viewBox="0 0 26 26"><rect x="6.8" y="2.8" width="16.2" height="16.2" fill="none" stroke="#2e2e2e" stroke-width="1.6"/><rect x="3" y="15" width="8" height="8" fill="#fff" stroke="#111" stroke-width="2.2"/></svg>
<div style="left:2209px;top:1237.8px;width:47.30px;height:47.20px;background:#e2e2e2;border:2px solid #6e6e6e;box-shadow:inset 0 0 0 1.5px #f4f4f4;"></div>
<svg style="left:2216.3px;top:1245px" width="32.3" height="32.3" viewBox="0 0 32.3 32.3"><rect width="32.3" height="32.3" fill="#b00014"/><rect x="10.3" y="4.3" width="16" height="5.5" fill="#fff"/><path d="M5.2 14 H10.6 L12.6 12.3 H27.6 V17 L24.2 26.3 H7.6 L5.2 20 Z" fill="#cc4a5e" stroke="#fff" stroke-width="2"/></svg>
<div style="left:280.8px;top:1551px;width:167.10px;height:95.40px;border-radius:4px;border:1px solid #76767a;background:linear-gradient(#d7d7dd 0,#d7d7dd 46.3px,#babac3 48px,#babac3 100%);box-shadow:inset 0 0 0 2.3px #f8f8fa;"></div>
<svg style="left:348.2px;top:1560.2px" width="32" height="32" viewBox="0 0 32 32"><rect width="32" height="32" fill="#aa0000"/><path d="M7.1 4.3 H14.8 L22.9 12.3 V28.3 H7.1 Z" fill="#fff"/><path d="M14.8 4.3 V12.3 H22.9 Z" fill="#d67aa8"/></svg>
<span class="t" style="top:1606.0px;font-size:24px;font-weight:normal;color:#1c1c2c;left:-35.75px;width:800px;text-align:center;"><u>N</u>eu</span>
<div style="left:469.3px;top:1551px;width:167.10px;height:95.40px;border-radius:4px;border:1px solid #76767a;background:linear-gradient(#d7d7dd 0,#d7d7dd 46.3px,#babac3 48px,#babac3 100%);box-shadow:inset 0 0 0 2.3px #f8f8fa;"></div>
<svg style="left:536.8px;top:1560.2px" width="32" height="32" viewBox="0 0 32 32"><rect width="32" height="32" fill="#b00014"/><path d="M10.9 4.5 Q14.5 1.8 18.2 4.5 Z" fill="#fff"/><rect x="6" y="4.3" width="17.4" height="2.2" fill="#fff"/><rect x="6" y="9" width="17.4" height="1.6" fill="#fff"/><defs><linearGradient id="tr" x1="0" y1="0" x2="1" y2="0"><stop offset="0" stop-color="#d86878"/><stop offset="1" stop-color="#f4d4da"/></linearGradient></defs><rect x="6" y="11.5" width="17.4" height="17.5" rx="2" fill="url(#tr)" stroke="#fff" stroke-width="2"/><rect x="8" y="12.5" width="13.4" height="1.4" fill="#d04a5a"/><rect x="8" y="26.3" width="13.4" height="1.4" fill="#d04a5a"/></svg>
<span class="t" style="top:1606.0px;font-size:24px;font-weight:normal;color:#1c1c2c;left:152.75px;width:800px;text-align:center;"><u>L</u>öschen</span>
<div style="left:642.3px;top:1551px;width:167.10px;height:95.40px;border-radius:4px;border:1px solid #76767a;background:linear-gradient(#d7d7dd 0,#d7d7dd 46.3px,#babac3 48px,#babac3 100%);box-shadow:inset 0 0 0 2.3px #f8f8fa;"></div>
<svg style="left:709.8px;top:1560.2px" width="32" height="32" viewBox="0 0 32 32"><rect width="32" height="32" fill="#b00014"/><path d="M10.7 2.4 H18.5 L25.4 9.3 V19.8 H16.5 L12 15.5 H10.7 Z" fill="#f4ccd4"/><path d="M4.7 12 H13 L19.4 18.4 V30 H4.7 Z" fill="#fff"/><path d="M13 12 V18.4 H19.4 Z" fill="#e8a0b0"/><path d="M12.5 10 L23 20.5" stroke="#b00014" stroke-width="1.6"/></svg>
<span class="t" style="top:1606.0px;font-size:24px;font-weight:normal;color:#1c1c2c;left:325.75px;width:800px;text-align:center;"><u>D</u>uplizieren</span>
<div style="left:830.8px;top:1551px;width:167.10px;height:95.40px;border-radius:4px;border:1px solid #76767a;background:linear-gradient(#d7d7dd 0,#d7d7dd 46.3px,#babac3 48px,#babac3 100%);box-shadow:inset 0 0 0 2.3px #f8f8fa;"></div>
<svg style="left:898.2px;top:1560.2px" width="32" height="32" viewBox="0 0 32 32"><rect width="32" height="32" fill="#b00014"/><path d="M7.1 4.3 H16.9 L22.3 9.7 V19.3 H7.1 Z" fill="#fff"/><path d="M16.9 4.3 V9.7 H22.3 Z" fill="#f0c0c8"/><path d="M2.4 16.1 H6.5 V20.5 H23 V16.1 H27.5 V28.6 H2.4 Z" fill="#e08e9a"/><rect x="3.8" y="22.3" width="22.3" height="5.8" fill="#fff"/><rect x="5.8" y="20.1" width="18.5" height="1.9" fill="#b00014"/><ellipse cx="22.9" cy="25" rx="1.8" ry="1.1" fill="#b00014"/></svg>
<span class="t" style="top:1606.0px;font-size:24px;font-weight:normal;color:#1c1c2c;left:514.25px;width:800px;text-align:center;">Manuskri<u>p</u>t</span>
<div style="left:1003.3px;top:1551px;width:167.10px;height:95.40px;border-radius:4px;border:1px solid #76767a;background:linear-gradient(#d7d7dd 0,#d7d7dd 46.3px,#babac3 48px,#babac3 100%);box-shadow:inset 0 0 0 2.3px #f8f8fa;"></div>
<svg style="left:1070.8px;top:1560.2px" width="32" height="32" viewBox="0 0 32 32"><rect width="32" height="32" fill="#b00014"/><path d="M7.1 4.3 H16.9 L22.3 9.7 V19.3 H7.1 Z" fill="#fff"/><path d="M16.9 4.3 V9.7 H22.3 Z" fill="#f0c0c8"/><path d="M2.4 16.1 H6.5 V20.5 H23 V16.1 H27.5 V28.6 H2.4 Z" fill="#e08e9a"/><rect x="3.8" y="22.3" width="22.3" height="5.8" fill="#fff"/><rect x="5.8" y="20.1" width="18.5" height="1.9" fill="#b00014"/><ellipse cx="22.9" cy="25" rx="1.8" ry="1.1" fill="#b00014"/></svg>
<span class="t" style="top:1606.0px;font-size:24px;font-weight:normal;color:#1c1c2c;left:686.75px;width:800px;text-align:center;"><u>B</u>estätigung</span>
<div style="left:1191.8px;top:1551px;width:167.10px;height:95.40px;border-radius:4px;border:1px solid #76767a;background:linear-gradient(#d7d7dd 0,#d7d7dd 46.3px,#babac3 48px,#babac3 100%);box-shadow:inset 0 0 0 2.3px #f8f8fa;"></div>
<svg style="left:1259.2px;top:1560.2px" width="32" height="32" viewBox="0 0 32 32"><rect width="32" height="32" fill="#b00014"/><path d="M12.8 4.3 H20.5 L27.2 11 V24 H12.8 Z" fill="#f0c4cc"/><path d="M17.5 16 H25 M17.5 20 H25" stroke="#b00014" stroke-width="1.5"/><rect x="3.2" y="8.4" width="13.6" height="19.6" fill="#fff"/><path d="M5.9 15 H13.6 M5.9 19.1 H13.6 M5.9 23.1 H13.6" stroke="#b00014" stroke-width="1.7"/><path d="M16.8 8 L21.5 12.5" stroke="#b00014" stroke-width="1.3"/></svg>
<span class="t" style="top:1606.0px;font-size:24px;font-weight:normal;color:#1c1c2c;left:875.25px;width:800px;text-align:center;">L<u>i</u>sten</span>
<div style="left:1364.3px;top:1551px;width:167.10px;height:95.40px;border-radius:4px;border:1px solid #76767a;background:linear-gradient(#d7d7dd 0,#d7d7dd 46.3px,#babac3 48px,#babac3 100%);box-shadow:inset 0 0 0 2.3px #f8f8fa;"></div>
<svg style="left:1431.8px;top:1560.2px" width="32" height="32" viewBox="0 0 32 32"><rect width="32" height="32" fill="#b00014"/><rect x="5.3" y="4.1" width="19.8" height="8.1" fill="#fff"/><circle cx="15.1" cy="8.2" r="2.9" fill="#c83448"/><rect x="5.3" y="13.9" width="19.8" height="14.4" fill="#fff"/><path d="M8.5 17.2 H21.9 M8.5 21.1 H21.9 M8.5 25.1 H21.9" stroke="#e4a0aa" stroke-width="1.6"/></svg>
<span class="t" style="top:1606.0px;font-size:24px;font-weight:normal;color:#1c1c2c;left:1047.75px;width:800px;text-align:center;">Archi<u>v</u></span>
<div style="left:1554.3px;top:1551px;width:167.10px;height:95.40px;border-radius:4px;border:1px solid #76767a;background:linear-gradient(#d7d7dd 0,#d7d7dd 46.3px,#babac3 48px,#babac3 100%);box-shadow:inset 0 0 0 2.3px #f8f8fa;"></div>
<svg style="left:1621.8px;top:1560.2px" width="32" height="32" viewBox="0 0 32 32"><rect width="32" height="32" fill="#12aa12"/><path d="M5.7 6.5 H24.5 V23.7 H16 L14.2 27.5 L10 23.7 H5.7 Z" fill="#fff"/><path d="M16.5 19.5 V8.5 L9 17.5 H20" fill="none" stroke="#4cb84c" stroke-width="2.4" stroke-linejoin="round"/></svg>
<span class="t" style="top:1606.0px;font-size:24px;font-weight:normal;color:#1c1c2c;left:1237.75px;width:800px;text-align:center;">Nach<u>r</u>ichten</span>
<div style="left:1743.3px;top:1551px;width:167.10px;height:95.40px;border-radius:4px;border:1px solid #76767a;background:linear-gradient(#d7d7dd 0,#d7d7dd 46.3px,#babac3 48px,#babac3 100%);box-shadow:inset 0 0 0 2.3px #f8f8fa;"></div>
<svg style="left:1810.8px;top:1560.2px" width="32" height="32" viewBox="0 0 32 32"><rect width="32" height="32" rx="4" fill="#b00014"/><circle cx="16" cy="16" r="5.3" fill="#fff"/><g stroke="#fff" stroke-width="2.8"><path d="M6.5 6.5 L11 11 M25.5 6.5 L21 11 M6.5 25.5 L11 21 M25.5 25.5 L21 21"/></g><g fill="#fff"><path d="M3.5 3.5 H11 L3.5 11 Z M28.5 3.5 H21 L28.5 11 Z M3.5 28.5 H11 L3.5 21 Z M28.5 28.5 H21 L28.5 21 Z"/></g></svg>
<span class="t" style="top:1606.0px;font-size:24px;font-weight:normal;color:#1c1c2c;left:1426.75px;width:800px;text-align:center;">JJKemedia</span>
<div style="left:1915.8px;top:1551px;width:167.10px;height:95.40px;border-radius:4px;border:1px solid #76767a;background:linear-gradient(#d7d7dd 0,#d7d7dd 46.3px,#babac3 48px,#babac3 100%);box-shadow:inset 0 0 0 2.3px #f8f8fa;"></div>
<svg style="left:1983.2px;top:1560.2px" width="32" height="32" viewBox="0 0 32 32"><rect width="32" height="32" fill="#12aa12"/><path d="M15.5 4.3 L27.7 9.2 L15.5 13.9 L2.7 9.2 Z" fill="#fff"/><path d="M3.2 12.5 L13.6 17 V27.5 L3.2 23 Z" fill="#fff"/><path d="M17.1 17 L27.2 12.5 V23 L17.1 27.5 Z" fill="#fff"/><path d="M15.3 17 V27.5" stroke="#9ad49a" stroke-width="2.4"/></svg>
<span class="t" style="top:1606.0px;font-size:24px;font-weight:normal;color:#1c1c2c;left:1599.25px;width:800px;text-align:center;">Media Paket</span>
<div style="left:0px;top:1688.5px;width:2320.00px;height:40.50px;background:#cbcbcf;"></div>
<span class="t" style="top:1698.5px;font-size:24px;font-weight:normal;color:#1c1c2c;left:15.5px;">Benutzer: JJK Admin  (admin)</span>
<span class="t" style="top:1698.5px;font-size:24px;font-weight:normal;color:#1c1c2c;left:928px;">Auftrag angelegt durch: JJK Admin  31.07.2024 13:31</span>
<span class="t" style="top:1698.5px;font-size:24px;font-weight:normal;color:#1c1c2c;right:20.5px;">© 2025 JJK GmbH</span>
</body></html>
